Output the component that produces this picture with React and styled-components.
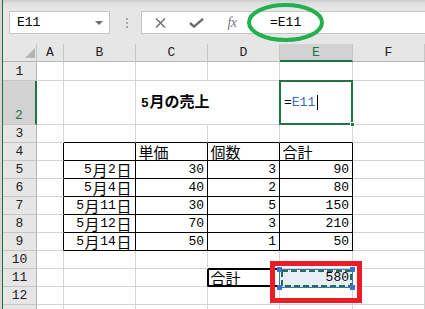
import React from 'react';
import styled, { createGlobalStyle } from 'styled-components';

const GRID = '#d4d4d4';
const BLACK = '#000';
const GREEN = '#217346';
const BLUE = '#3f6fd0';

const GlobalStyle = createGlobalStyle`
  html, body { margin: 0; padding: 0; background: #fff; }
  body { font-family: "Liberation Mono", "Noto Sans CJK JP", monospace; color: #000; }
  #root { width: 425px; height: 309px; overflow: hidden; }
`;

const Window = styled.div`
  display: flex;
  width: 425px;
  height: 309px;
  overflow: hidden;
`;

const Strip = styled.div`
  flex: 0 0 3px;
  background: linear-gradient(to right, #d6d6d6 0 2px, #2a6a45 2px 3px);
`;

const Main = styled.div`
  position: relative;
  flex: 1 1 auto;
  min-width: 0;
  display: flex;
  flex-direction: column;
`;

const Toolbar = styled.div`
  flex: 0 0 44px;
  display: flex;
  align-items: flex-start;
  box-sizing: border-box;
  padding-top: 11px;
  background: linear-gradient(#cdcdcd 0px, #e1e1e1 4px, #e6e6e6 8px);
`;

const NameBox = styled.div`
  box-sizing: border-box;
  width: 101px;
  height: 23px;
  margin-left: 6px;
  background: #fff;
  border: 1px solid #c6c6c6;
  display: flex;
  align-items: center;
  padding: 0 6px 0 7px;
`;

const DropArrow = styled.span`
  margin-left: auto;
  width: 0;
  height: 0;
  border-left: 4px solid transparent;
  border-right: 4px solid transparent;
  border-top: 4px solid #6d6d6d;
`;

const Grip = styled.div`
  margin: 7px 0 0 16px;
  display: flex;
  flex-direction: column;
  gap: 2px;
`;

const GripDot = styled.span`
  width: 2px;
  height: 2px;
  background: #a6a6a6;
`;

const FormulaBox = styled.div`
  box-sizing: border-box;
  flex: 1 1 auto;
  height: 23px;
  margin-left: 13px;
  background: #fff;
  border: 1px solid #c6c6c6;
  border-right: none;
  display: flex;
  align-items: center;
`;

const IconSlot = styled.div`
  width: 36px;
  height: 100%;
  display: flex;
  align-items: center;
  justify-content: center;
`;

const FxLabel = styled.span`
  font-family: "Liberation Serif", serif;
  font-style: italic;
  font-size: 14px;
  color: #7a7a7a;
  letter-spacing: -0.5px;
`;

const FormulaText = styled.div`
  margin-left: 20px;
  display: flex;
  align-items: center;
`;

const Ellipse = styled.svg`
  position: absolute;
  left: 244px;
  top: 0;
  z-index: 5;
  pointer-events: none;
`;

const Highlight = styled.div`
  position: absolute;
  left: 267px;
  top: 261px;
  width: 92px;
  height: 42px;
  box-sizing: border-box;
  border: 5px solid #ed1c24;
  z-index: 6;
  pointer-events: none;
`;

const Sheet = styled.div`
  display: grid;
  grid-template-columns: 34px 27px 72px 72px 72px 73px 72px;
  grid-template-rows: 18px 19px 44px repeat(11, 18px);
  background: #fff;
`;

const Corner = styled.div`
  box-sizing: border-box;
  background: #e6e6e6;
  border-right: 1px solid #c6c6c6;
  border-bottom: 1px solid #b5b5b5;
  display: flex;
  justify-content: flex-end;
  align-items: flex-end;
  padding: 0 1px 3px 0;
`;

const ColHeader = styled.div`
  box-sizing: border-box;
  display: flex;
  align-items: center;
  justify-content: center;
  background: ${(p) => (p.$active ? '#d2d2d2' : '#e6e6e6')};
  color: ${(p) => (p.$active ? GREEN : '#222')};
  border-right: 1px solid #c6c6c6;
  border-bottom: ${(p) => (p.$active ? `2px solid ${GREEN}` : '1px solid #b5b5b5')};
  font-family: "Liberation Mono", monospace;
  font-size: 13px;
`;

const RowHeader = styled.div`
  box-sizing: border-box;
  display: flex;
  align-items: flex-end;
  justify-content: center;
  line-height: 17px;
  background: ${(p) => (p.$active ? '#d2d2d2' : '#e6e6e6')};
  color: ${(p) => (p.$active ? GREEN : '#222')};
  border-right: ${(p) => (p.$active ? `2px solid ${GREEN}` : '1px solid #b5b5b5')};
  border-bottom: 1px solid #c6c6c6;
  font-family: "Liberation Mono", monospace;
  font-size: 13px;
`;

const Cell = styled.div`
  position: relative;
  box-sizing: border-box;
  min-width: 0;
  display: flex;
  align-items: center;
  justify-content: ${(p) => (p.$align === 'right' ? 'flex-end' : 'flex-start')};
  padding: 0 3px 0 ${(p) => p.$indent || 2}px;
  line-height: 16px;
  white-space: nowrap;
  border-right: 1px solid ${(p) => p.$r};
  border-bottom: 1px solid ${(p) => p.$b};
  background: ${(p) => p.$fill || 'transparent'};
  box-shadow: ${(p) => (p.$boxed ? `inset 1px 1px 0 ${BLACK}, inset 0 -1px 0 ${BLACK}` : 'none')};
  z-index: ${(p) => p.$z || 'auto'};
`;

const Half = styled.span`
  font-family: "Liberation Mono", monospace;
  font-size: 13px;
  color: ${(p) => p.$color || 'inherit'};
`;

const Full = styled.span`
  font-family: "Noto Sans CJK JP", sans-serif;
  font-size: 15px;
  margin: 0 0.6px;
  color: ${(p) => p.$color || 'inherit'};
`;

const Title = styled.span`
  font-weight: 700;
`;

const EditFrame = styled.div`
  position: absolute;
  top: -1px;
  left: -1px;
  right: -1px;
  bottom: -1px;
  border: 2px solid ${GREEN};
  pointer-events: none;
`;

const FillHandle = styled.div`
  position: absolute;
  right: -3px;
  bottom: -3px;
  width: 5px;
  height: 5px;
  box-sizing: border-box;
  background: ${GREEN};
  border: 1px solid #fff;
`;

const Caret = styled.span`
  display: inline-block;
  width: 1px;
  height: 15px;
  margin-left: 2px;
  background: #000;
`;

const RefOutline = styled.div`
  position: absolute;
  top: 0;
  left: -1px;
  right: -1px;
  bottom: -2px;
  border: 1px solid ${BLUE};
  pointer-events: none;
`;

const Marquee = styled.svg`
  position: absolute;
  left: 1px;
  top: 1px;
  pointer-events: none;
`;

const Handle = styled.div`
  position: absolute;
  width: 5px;
  height: 5px;
  background: ${BLUE};
  ${(p) => (p.$x === 'left' ? 'left: -3px;' : 'right: -3px;')}
  ${(p) => (p.$y === 'top' ? 'top: -2px;' : 'bottom: -4px;')}
`;

function Txt({ children, color }) {
  const parts = String(children).match(/[\x00-\x7f]+|[^\x00-\x7f]+/g) || [];
  return parts.map((p, i) =>
    /^[\x00-\x7f]/.test(p) ? (
      <Half key={i} $color={color}>{p}</Half>
    ) : (
      <Full key={i} $color={color}>{p}</Full>
    )
  );
}

const COLS = ['A', 'B', 'C', 'D', 'E', 'F'];
const ROWS = [1, 2, 3, 4, 5, 6, 7, 8, 9, 10, 11, 12, 13];
const TCOLS = 'BCDE';
const HEAD = { C: '単価', D: '個数', E: '合計' };
const TABLE = [
  ['5月2日', '30', '3', '90'],
  ['5月4日', '40', '2', '80'],
  ['5月11日', '30', '5', '150'],
  ['5月12日', '70', '3', '210'],
  ['5月14日', '50', '1', '50'],
];

function renderCell(r, c) {
  const key = `${c}${r}`;
  const inT = r >= 4 && r <= 9 && TCOLS.includes(c);
  let right = GRID;
  let bottom = GRID;
  if (inT) {
    right = BLACK;
    bottom = BLACK;
  }
  if (r === 3 && TCOLS.includes(c)) bottom = BLACK;
  if (c === 'A' && r >= 4 && r <= 9) right = BLACK;
  if (r === 10 && c === 'D') bottom = BLACK;
  if (r === 11 && (c === 'C' || c === 'D')) right = BLACK;
  if (r === 11 && c === 'D') bottom = BLACK;
  if (r === 2 && c === 'C') right = 'transparent';

  const base = { key, $r: right, $b: bottom };

  if (r === 2 && c === 'C') {
    return (
      <Cell {...base} $indent={5}>
        <Title>
          <Txt>5月の売上</Txt>
        </Title>
      </Cell>
    );
  }
  if (r === 2 && c === 'E') {
    return (
      <Cell {...base} $indent={4} $z={2}>
        <EditFrame />
        <FillHandle />
        <Txt>=</Txt>
        <Txt color="#3a6cc8">E11</Txt>
        <Caret />
      </Cell>
    );
  }
  if (r === 4 && HEAD[c]) {
    return (
      <Cell {...base}>
        <Txt>{HEAD[c]}</Txt>
      </Cell>
    );
  }
  if (r >= 5 && r <= 9 && inT) {
    return (
      <Cell {...base} $align="right">
        <Txt>{TABLE[r - 5][TCOLS.indexOf(c)]}</Txt>
      </Cell>
    );
  }
  if (r === 11 && c === 'D') {
    return (
      <Cell {...base} $boxed>
        <Txt>合計</Txt>
      </Cell>
    );
  }
  if (r === 11 && c === 'E') {
    return (
      <Cell {...base} $align="right" $fill="#e8eef9" $z={2}>
        <Txt>580</Txt>
        <RefOutline />
        <Marquee width="71" height="17" viewBox="0 0 71 17">
          <rect x="1" y="1" width="69" height="15" fill="none" stroke={GREEN} strokeWidth="2" strokeDasharray="6 3" />
        </Marquee>
        <Handle $x="left" $y="top" />
        <Handle $x="right" $y="top" />
        <Handle $x="left" $y="bottom" />
        <Handle $x="right" $y="bottom" />
      </Cell>
    );
  }
  return <Cell {...base} />;
}

export default function App() {
  return (
    <>
      <GlobalStyle />
      <Window>
        <Strip />
        <Main>
          <Toolbar>
            <NameBox>
              <Half>E11</Half>
              <DropArrow />
            </NameBox>
            <Grip>
              <GripDot />
              <GripDot />
              <GripDot />
            </Grip>
            <FormulaBox>
              <IconSlot>
                <svg width="11" height="10" viewBox="0 0 11 10">
                  <path d="M1 0.5 L10 9.5 M10 0.5 L1 9.5" stroke="#6d6d6d" strokeWidth="1.4" fill="none" />
                </svg>
              </IconSlot>
              <IconSlot>
                <svg width="15" height="10" viewBox="0 0 15 10">
                  <path d="M1 5 L5 8.6 L14 0.8" stroke="#6d6d6d" strokeWidth="2.4" fill="none" />
                </svg>
              </IconSlot>
              <IconSlot>
                <FxLabel>fx</FxLabel>
              </IconSlot>
              <FormulaText>
                <Half>=E11</Half>
              </FormulaText>
            </FormulaBox>
          </Toolbar>
          <Ellipse width="80" height="45" viewBox="0 0 80 45">
            <ellipse cx="38.5" cy="22.5" rx="36.5" ry="17.5" fill="none" stroke="#22b14c" strokeWidth="4" />
          </Ellipse>
          <Sheet>
            <Corner>
              <svg width="10" height="10" viewBox="0 0 10 10">
                <path d="M10 0 L10 10 L0 10 Z" fill="#b4b4b4" />
              </svg>
            </Corner>
            {COLS.map((c) => (
              <ColHeader key={c} $active={c === 'E'}>
                {c}
              </ColHeader>
            ))}
            {ROWS.map((r) => (
              <React.Fragment key={r}>
                <RowHeader $active={r === 2}>{r < 13 ? r : ''}</RowHeader>
                {COLS.map((c) => renderCell(r, c))}
              </React.Fragment>
            ))}
          </Sheet>
          <Highlight />
        </Main>
      </Window>
    </>
  );
}
